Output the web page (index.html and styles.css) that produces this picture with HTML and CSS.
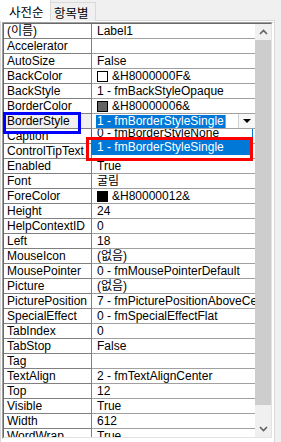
FILE: index.html
```html
<!DOCTYPE html>
<html lang="ko">
<head>
  <meta charset="UTF-8">
  <title>Properties</title>
  <link rel="stylesheet" href="styles.css">
</head>
<body>

  <!-- Tabs -->
  <div class="tabs">
    <div class="tab active">사전순</div>
    <div class="tab">항목별</div>
  </div>

  <!-- Property grid -->
  <div class="page">
    <div class="grid">
      <div class="grid-inner">
        <div class="rows">
          <div class="row"><div class="name">(이름)</div><div class="val">Label1</div></div>
          <div class="row"><div class="name">Accelerator</div><div class="val"></div></div>
          <div class="row"><div class="name">AutoSize</div><div class="val">False</div></div>
          <div class="row"><div class="name">BackColor</div><div class="val"><span class="swatch sw-white"></span>&amp;H8000000F&amp;</div></div>
          <div class="row"><div class="name">BackStyle</div><div class="val">1 - fmBackStyleOpaque</div></div>
          <div class="row"><div class="name">BorderColor</div><div class="val"><span class="swatch sw-gray"></span>&amp;H80000006&amp;</div></div>
          <div class="row current">
            <div class="name">BorderStyle</div>
            <div class="val edit">
              <div class="edit-box"><span class="sel">1 - fmBorderStyleSingle</span><span class="caret"></span></div>
              <div class="drop-btn"><span class="tri"></span></div>
            </div>
          </div>
          <div class="row"><div class="name">Caption</div><div class="val"></div></div>
          <div class="row"><div class="name">ControlTipText</div><div class="val"></div></div>
          <div class="row"><div class="name">Enabled</div><div class="val">True</div></div>
          <div class="row"><div class="name">Font</div><div class="val">굴림</div></div>
          <div class="row"><div class="name">ForeColor</div><div class="val"><span class="swatch sw-black"></span>&amp;H80000012&amp;</div></div>
          <div class="row"><div class="name">Height</div><div class="val">24</div></div>
          <div class="row"><div class="name">HelpContextID</div><div class="val">0</div></div>
          <div class="row"><div class="name">Left</div><div class="val">18</div></div>
          <div class="row"><div class="name">MouseIcon</div><div class="val">(없음)</div></div>
          <div class="row"><div class="name">MousePointer</div><div class="val">0 - fmMousePointerDefault</div></div>
          <div class="row"><div class="name">Picture</div><div class="val">(없음)</div></div>
          <div class="row"><div class="name">PicturePosition</div><div class="val">7 - fmPicturePositionAboveCenter</div></div>
          <div class="row"><div class="name">SpecialEffect</div><div class="val">0 - fmSpecialEffectFlat</div></div>
          <div class="row"><div class="name">TabIndex</div><div class="val">0</div></div>
          <div class="row"><div class="name">TabStop</div><div class="val">False</div></div>
          <div class="row"><div class="name">Tag</div><div class="val"></div></div>
          <div class="row"><div class="name">TextAlign</div><div class="val">2 - fmTextAlignCenter</div></div>
          <div class="row"><div class="name">Top</div><div class="val">12</div></div>
          <div class="row"><div class="name">Visible</div><div class="val">True</div></div>
          <div class="row"><div class="name">Width</div><div class="val">612</div></div>
          <div class="row"><div class="name">WordWrap</div><div class="val">True</div></div>
        </div>

        <!-- Scrollbar -->
        <div class="scroll">
          <div class="arrow">
            <svg width="9" height="6" viewBox="0 0 9 6"><polyline points="1,5 4.5,1.5 8,5" fill="none" stroke="#606060" stroke-width="1.6"/></svg>
          </div>
          <div class="thumb"></div>
          <div class="track"></div>
          <div class="arrow">
            <svg width="9" height="6" viewBox="0 0 9 6"><polyline points="1,1 4.5,4.5 8,1" fill="none" stroke="#606060" stroke-width="1.6"/></svg>
          </div>
        </div>
      </div>
    </div>
  </div>

  <!-- Open dropdown list -->
  <div class="drop-list">
    <div class="drop-items">
      <div class="item">0 - fmBorderStyleNone</div>
      <div class="item picked">1 - fmBorderStyleSingle</div>
    </div>
  </div>

  <!-- Annotation boxes -->
  <div class="mark mark-blue"></div>
  <div class="mark mark-red"></div>

</body>
</html>
```

FILE: styles.css
```css
body {
  margin: 0;
  width: 281px;
  height: 442px;
  overflow: hidden;
  position: relative;
  background-color: #f0f0f0;
  font-family: "Liberation Sans", "Noto Sans CJK KR", sans-serif;
  font-size: 12px;
  color: #000;
}

/* Tabs */
.tabs {
  display: flex;
  align-items: flex-end;
  height: 21px;
  position: relative;
  z-index: 2;
}
.tab {
  width: 41px;
  height: 18px;
  line-height: 19px;
  padding-left: 3px;
  background-color: #f0f0f0;
  border: 1px solid #d9d9d9;
  border-bottom: none;
  border-left: none;
  font-family: "Noto Sans CJK KR", sans-serif;
  font-size: 12.5px;
}
.tab.active {
  width: 41px;
  height: 21px;
  line-height: 23px;
  padding-left: 9px;
  background-color: #fff;
}

/* Tab page and grid frame */
.page {
  margin-top: -1px;
  width: 271px;
  height: 419px;
  border: 1px solid #d9d9d9;
  background-color: #fff;
  padding: 1px;
}
.grid {
  border: 1px solid;
  border-color: #a0a0a0 #fff #fff #a0a0a0;
  height: 415px;
}
.grid-inner {
  display: flex;
  height: 413px;
  border: 1px solid;
  border-color: #696969 #e3e3e3 #e3e3e3 #696969;
  background-color: #fff;
}

/* Rows */
.rows {
  flex: 1;
  overflow: hidden;
}
.row {
  display: flex;
  height: 15px;
}
.name {
  width: 84px;
  padding-left: 3px;
  border-right: 1px solid #808080;
  border-bottom: 1px solid #808080;
  line-height: 14px;
  height: 14px;
  white-space: nowrap;
  overflow: hidden;
}
.val {
  flex: 1;
  padding-left: 5px;
  border-bottom: 1px solid #a0a0a0;
  line-height: 14px;
  height: 14px;
  white-space: nowrap;
  overflow: hidden;
  display: flex;
  align-items: center;
}
.current .name {
  background-color: #f0f0f0;
}
.swatch {
  width: 9px;
  height: 9px;
  border: 1px solid #000;
  margin-right: 4px;
  flex: none;
}
.sw-white { background-color: #fff; }
.sw-gray { background-color: #646464; }
.sw-black { background-color: #000; }

/* Edited value with dropdown button */
.val.edit {
  padding-left: 0;
}
.edit-box {
  flex: 1;
  display: flex;
  align-items: center;
  padding-left: 4px;
  height: 14px;
}
.sel {
  background-color: #0078d7;
  color: #fff;
  line-height: 13px;
  padding: 0 1px;
}
.caret {
  width: 1px;
  height: 13px;
  background-color: #ff8728;
}
.drop-btn {
  width: 16px;
  height: 14px;
  background-color: #f7f7f7;
  border-left: 1px solid #d0d0d0;
  display: flex;
  align-items: center;
  justify-content: center;
}
.tri {
  width: 0;
  height: 0;
  border-left: 4px solid transparent;
  border-right: 4px solid transparent;
  border-top: 4px solid #000;
}

/* Scrollbar */
.scroll {
  width: 16px;
  display: flex;
  flex-direction: column;
  background-color: #f0f0f0;
}
.arrow {
  height: 16px;
  display: flex;
  align-items: center;
  justify-content: center;
}
.thumb {
  height: 365px;
  background-color: #cdcdcd;
}
.track {
  flex: 1;
}

/* Dropdown list */
.drop-list {
  position: absolute;
  left: 91px;
  top: 129px;
  width: 160px;
  height: 25px;
  border: 1px solid #0078d7;
  border-top: none;
  background-color: #fff;
  overflow: hidden;
}
.drop-items {
  margin-top: -3px;
}
.item {
  height: 14px;
  line-height: 14px;
  padding-left: 5px;
  white-space: nowrap;
}
.item.picked {
  background-color: #0078d7;
  color: #fff;
}

/* Annotation marks */
.mark {
  position: absolute;
  box-sizing: border-box;
  border: 3px solid;
}
.mark-blue {
  left: 3px;
  top: 112px;
  width: 78px;
  height: 22px;
  border-color: #0000ff;
}
.mark-red {
  left: 86px;
  top: 137px;
  width: 167px;
  height: 24px;
  border-color: #ff0000;
}
```
